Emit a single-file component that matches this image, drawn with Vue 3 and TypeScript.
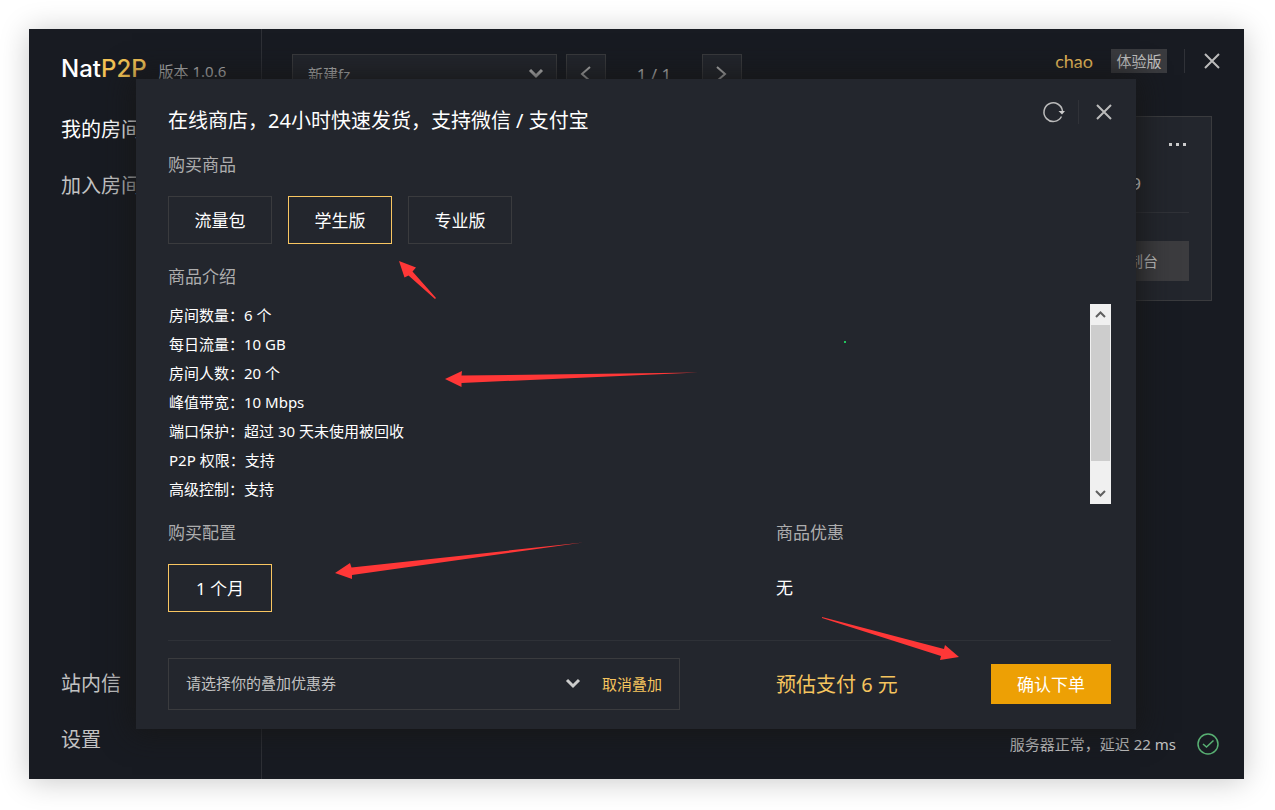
<script setup lang="ts">
import { ref } from 'vue'

interface Detail {
  name: string
  value: string
}

const products: string[] = ['流量包', '学生版', '专业版']
const product = ref<string>('学生版')

const details: Detail[] = [
  { name: '房间数量', value: '6 个' },
  { name: '每日流量', value: '10 GB' },
  { name: '房间人数', value: '20 个' },
  { name: '峰值带宽', value: '10 Mbps' },
  { name: '端口保护', value: '超过 30 天未使用被回收' },
  { name: 'P2P 权限', value: '支持' },
  { name: '高级控制', value: '支持' },
]

const periods: string[] = ['1 个月']
const period = ref<string>('1 个月')

const arrows: string[] = [
  '399,261 416,267.5 412.5,271.5 436,298 435,299 408.5,275.5 404.5,277.5',
  '445,379 462,371 461.5,375.5 698,372.5 461.5,383 461.5,387',
  '335,573 350,563 351.5,567.5 583,542.5 352,575 352,579',
  '822,617 944,649 945,645 959,657 940,660 941,656 822,618',
]
</script>

<template>
  <div class="page">
    <div class="window">
      <aside class="sidebar">
        <div class="brand">
          <span class="logo">Nat<span class="gold">P2P</span></span>
          <span class="version">版本 1.0.6</span>
        </div>
        <nav class="nav">
          <a class="current" href="#rooms">我的房间</a>
          <a href="#join">加入房间</a>
          <a class="push" href="#mail">站内信</a>
          <a href="#settings">设置</a>
        </nav>
      </aside>

      <main class="main">
        <header class="topbar">
          <div class="room-tools">
            <div class="room-select">
              <select aria-label="房间">
                <option>新建fz</option>
              </select>
              <svg class="chevron" width="16" height="16" viewBox="0 0 16 16">
                <path d="M2 4l6 6 6-6" />
              </svg>
            </div>
            <button class="square" aria-label="上一页">
              <svg width="16" height="16" viewBox="0 0 16 16"><path d="M12 1L4 8l8 7" /></svg>
            </button>
            <span class="pager">1 / 1</span>
            <button class="square" aria-label="下一页">
              <svg width="16" height="16" viewBox="0 0 16 16"><path d="M3 1l8 7-8 7" /></svg>
            </button>
          </div>
          <div class="account">
            <a class="user" href="#user">chao</a>
            <span class="badge">体验版</span>
            <span class="bar"></span>
            <button class="icon" aria-label="关闭窗口">
              <svg width="24" height="24" viewBox="0 0 24 24"><path d="M5 5l14 14M19 5L5 19" /></svg>
            </button>
          </div>
        </header>

        <section class="card">
          <button class="icon more" aria-label="更多">
            <svg width="24" height="24" viewBox="0 0 24 24">
              <path class="dots" d="M4 11h3v3h-3zM11 11h3v3h-3zM18 11h3v3h-3z" />
            </svg>
          </button>
          <div class="room-id">9</div>
          <button class="console">控制台</button>
        </section>

        <footer class="status">
          <span>服务器正常，延迟 22 ms</span>
          <svg width="24" height="24" viewBox="0 0 24 24">
            <circle cx="12" cy="12" r="10" />
            <path d="M7 12l3.500 3L17.500 8.500" />
          </svg>
        </footer>
      </main>

      <div class="modal" role="dialog" aria-labelledby="shop-title">
        <header class="modal-head">
          <h1 id="shop-title">在线商店，24小时快速发货，支持微信 / 支付宝</h1>
          <div class="modal-tools">
            <button class="icon" aria-label="刷新">
              <svg width="24" height="24" viewBox="0 0 24 24">
                <path class="thin" d="M19.500 16.500A9.300 9.300 0 1 1 20.500 11" />
                <path class="fill" d="M16.500 11h6.500L20 14.500z" />
              </svg>
            </button>
            <span class="bar dim"></span>
            <button class="icon" aria-label="关闭">
              <svg width="24" height="24" viewBox="0 0 24 24"><path d="M5 5l14 14M19 5L5 19" /></svg>
            </button>
          </div>
        </header>

        <div class="modal-body">
          <h2>购买商品</h2>
          <div class="options">
            <button
              v-for="item in products"
              :key="item"
              :class="['option', { active: item === product }]"
              :aria-pressed="item === product"
              @click="product = item"
            >{{ item }}</button>
          </div>

          <h2 class="tight">商品介绍</h2>
          <div class="detail-box">
            <ul class="details">
              <li v-for="row in details" :key="row.name">{{ row.name }}：{{ row.value }}</li>
            </ul>
            <div class="scrollbar">
              <button aria-label="向上滚动">
                <svg width="21" height="21" viewBox="0 0 21 21"><path d="M6 13l4.500-4.500L15 13" /></svg>
              </button>
              <div class="thumb"></div>
              <button class="down" aria-label="向下滚动">
                <svg width="21" height="21" viewBox="0 0 21 21"><path d="M6 8l4.500 4.500L15 8" /></svg>
              </button>
            </div>
          </div>

          <div class="columns">
            <div>
              <h2>购买配置</h2>
              <div class="options">
                <button
                  v-for="item in periods"
                  :key="item"
                  :class="['option', { active: item === period }]"
                  :aria-pressed="item === period"
                  @click="period = item"
                >{{ item }}</button>
              </div>
            </div>
            <div>
              <h2>商品优惠</h2>
              <p class="discount">无</p>
            </div>
          </div>

          <footer class="columns checkout">
            <div class="coupon">
              <select aria-label="叠加优惠券">
                <option>请选择你的叠加优惠券</option>
              </select>
              <svg class="chevron" width="16" height="16" viewBox="0 0 16 16">
                <path d="M2 4l6 6 6-6" />
              </svg>
              <button class="link">取消叠加</button>
            </div>
            <div class="pay">
              <span class="price">预估支付 6 元</span>
              <button class="confirm">确认下单</button>
            </div>
          </footer>
        </div>
      </div>
    </div>

    <svg class="marks" width="1275" height="810" viewBox="0 0 1275 810" aria-hidden="true">
      <polygon v-for="points in arrows" :key="points" :points="points" />
      <rect x="844" y="341" width="2" height="2" />
    </svg>
  </div>
</template>

<style>
body {
  margin: 0;
  background: #fff;
}
</style>

<style scoped>
* {
  box-sizing: border-box;
}
.page {
  position: relative;
  min-height: 100vh;
  padding: 29px 31px 31px 29px;
  display: flex;
  overflow: hidden;
  font-family: "Noto Sans", "Noto Sans CJK SC", sans-serif;
  font-size: 15px;
  color: #c2c2c2;
}
button,
select {
  margin: 0;
  padding: 0;
  border: 0;
  border-radius: 0;
  background: none;
  font: inherit;
  color: inherit;
  cursor: pointer;
}
select {
  appearance: none;
  flex: 1;
  min-width: 0;
  outline: none;
}
h1,
h2,
p,
ul {
  margin: 0;
  padding: 0;
  font-weight: 400;
}
a {
  color: inherit;
  text-decoration: none;
}
svg {
  display: block;
  flex: none;
  fill: none;
  stroke: #bbb;
  stroke-width: 2;
}
.window {
  position: relative;
  flex: 1;
  display: flex;
  background: #181b22;
  box-shadow: 0 2px 28px rgba(0, 0, 0, 0.22);
}
.sidebar {
  flex: none;
  width: 233px;
  display: flex;
  flex-direction: column;
  padding-bottom: 11px;
  border-right: 1px solid #2e3036;
}
.brand {
  height: 73px;
  padding: 24px 0 0 32px;
  display: flex;
  align-items: baseline;
  gap: 12px;
  line-height: 32px;
  white-space: nowrap;
}
.logo {
  font-family: Inter, sans-serif;
  font-size: 24px;
  font-weight: 500;
  color: #fff;
}
.gold {
  color: #f5c455;
}
.nav {
  flex: 1;
  display: flex;
  flex-direction: column;
  padding-left: 32px;
  font-size: 20px;
  line-height: 56px;
}
.current {
  color: #fff;
}
.push {
  margin-top: auto;
}
.main {
  flex: 1;
  min-width: 0;
  display: flex;
  flex-direction: column;
}
.topbar {
  display: flex;
  justify-content: space-between;
  align-items: flex-start;
  padding: 20px 20px 0 30px;
}
.room-tools {
  margin-top: 5px;
  display: flex;
  align-items: center;
}
.room-select {
  width: 265px;
  height: 40px;
  margin-right: 9px;
  padding: 0 12px 0 15px;
  display: flex;
  align-items: center;
  background: #23262d;
  border: 1px solid #3a3b3e;
}
.room-select select {
  height: 38px;
}
.square {
  width: 40px;
  height: 40px;
  display: grid;
  place-items: center;
  background: #23262d;
  border: 1px solid #3a3b3e;
}
.pager {
  width: 96px;
  text-align: center;
  font-size: 17px;
}
.account {
  display: flex;
  align-items: center;
  height: 24px;
}
.user {
  font-family: Lato, sans-serif;
  font-size: 18px;
  color: #f5c45e;
}
.badge {
  margin: 0 17px 0 18px;
  width: 56px;
  text-align: center;
  line-height: 24px;
  background: #3a3b3f;
}
.bar {
  width: 1px;
  height: 24px;
  margin-right: 15px;
  background: #303238;
}
.bar.dim {
  margin: 0 13px 0 12px;
}
.icon {
  width: 24px;
  height: 24px;
}
.icon .dots,
.icon .fill {
  fill: #ccc;
  stroke: none;
}
.icon .thin {
  stroke-width: 1.5;
}
.card {
  align-self: flex-end;
  width: 290px;
  margin: 22px 32px 0 0;
  padding: 15px 22px 19px;
  display: flex;
  flex-direction: column;
  background: #23262d;
  border: 1px solid #3a3b3e;
}
.more {
  align-self: flex-end;
}
.room-id {
  margin: 14px 0 28px;
  padding: 0 48px 14px 0;
  line-height: 28px;
  text-align: right;
  font-size: 17px;
  color: #fff;
  border-bottom: 1px solid #303238;
}
.console {
  align-self: flex-end;
  width: 107px;
  height: 40px;
  padding-bottom: 2px;
  background: #3c3c3f;
}
.status {
  margin-top: auto;
  padding: 0 24px 23px;
  display: flex;
  justify-content: flex-end;
  gap: 20px;
  line-height: 24px;
}
.status svg {
  stroke: #58b073;
  stroke-width: 1.5;
}
.modal {
  position: absolute;
  top: 50px;
  left: 107px;
  right: 108px;
  background: #23262d;
  box-shadow: 0 0 28px 4px rgba(22, 22, 22, 0.9);
}
.modal-head {
  display: flex;
  justify-content: space-between;
  align-items: flex-start;
  padding: 21px 20px 0 32px;
}
h1 {
  margin-top: 4px;
  font-size: 20px;
  line-height: 34px;
  color: #fff;
}
.modal-tools {
  display: flex;
  align-items: center;
}
.modal-body {
  padding: 14px 25px 19px 32px;
}
h2 {
  margin-bottom: 18px;
  font-size: 17px;
  line-height: 26px;
  color: #adadad;
}
.tight {
  margin: 20px 0 14px;
}
.options {
  display: flex;
  gap: 16px;
}
.option {
  width: 104px;
  height: 48px;
  padding-bottom: 2px;
  font-size: 17px;
  color: #fff;
  border: 1px solid #3a3b3e;
}
.option.active {
  border-color: #f9c661;
}
.detail-box {
  display: flex;
  height: 200px;
}
.details {
  flex: 1;
  display: flex;
  flex-direction: column;
  gap: 7px;
  padding-left: 1px;
  list-style: none;
  line-height: 22px;
  color: #fff;
}
.scrollbar {
  width: 21px;
  display: flex;
  flex-direction: column;
  padding: 0 1px;
  background: #f0f0f0;
}
.scrollbar button {
  width: 19px;
  height: 21px;
  display: flex;
  justify-content: center;
}
.scrollbar svg {
  stroke: #606060;
}
.thumb {
  height: 136px;
  background: #cdcdcd;
}
.scrollbar .down {
  margin-top: auto;
}
.columns {
  display: grid;
  grid-template-columns: 608fr 335fr;
  margin-top: 16px;
}
.discount {
  line-height: 48px;
  font-size: 17px;
  color: #fff;
}
.checkout {
  margin-top: 28px;
  padding-top: 17px;
  border-top: 1px solid #2e3137;
}
.coupon {
  height: 52px;
  margin-right: 96px;
  padding: 0 17px;
  display: flex;
  align-items: center;
  border: 1px solid #3a3b3e;
}
.coupon select {
  height: 50px;
  padding-bottom: 2px;
}
.chevron {
  stroke: #ccc;
  stroke-width: 3;
}
.link {
  margin-left: 21px;
  padding-bottom: 2px;
  color: #f5c45e;
}
.pay {
  display: flex;
  align-items: center;
  justify-content: space-between;
}
.price {
  padding-bottom: 2px;
  font-size: 20px;
  color: #f5c45e;
}
.confirm {
  width: 120px;
  height: 40px;
  padding-bottom: 2px;
  font-size: 17px;
  color: #fff;
  background: #eda005;
}
.marks {
  position: absolute;
  top: 0;
  left: 0;
  stroke: none;
  pointer-events: none;
}
.marks polygon {
  fill: #ff3737;
}
.marks rect {
  fill: #22c55e;
}
</style>
